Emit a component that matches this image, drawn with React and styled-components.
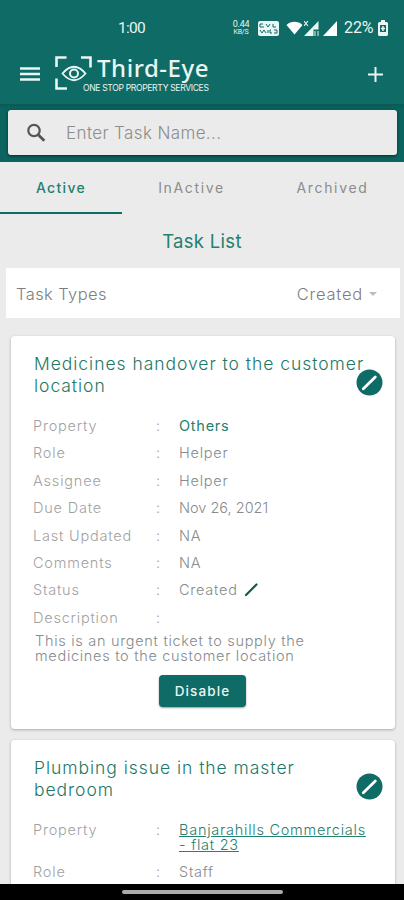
import React, { useState } from "react";
import styled, { createGlobalStyle } from "styled-components";

const GlobalStyle = createGlobalStyle`
  * {
    box-sizing: border-box;
  }
  body {
    margin: 0;
    overflow: hidden;
    background: #ebebeb;
    font-family: Inter, "Liberation Sans", sans-serif;
    font-weight: 300;
  }
`;

const Screen = styled.div`
  display: flex;
  flex-direction: column;
  height: 900px;
  overflow: hidden;
  background: #ebebeb;
`;

const Header = styled.header`
  flex: none;
  height: 104px;
  padding-top: 16px;
  background: #0f6b65;
  color: #e9f6f3;
`;

const StatusBar = styled.div`
  display: flex;
  align-items: center;
  height: 24px;
  padding: 0 16px 0 118px;
`;

const Clock = styled.span`
  flex: 1;
  font: 400 15.5px/20px Roboto, sans-serif;
  letter-spacing: -0.7px;
`;

const Speed = styled.span`
  display: flex;
  flex-direction: column;
  align-items: center;
  width: 18px;
  margin-right: 8px;
  font: 400 9px/9px Roboto, sans-serif;
  letter-spacing: -0.2px;

  small {
    font-size: 7px;
    line-height: 7px;
  }
`;

const StatusIcon = styled.svg`
  flex: none;
  margin-right: ${(props) => props.$gap || 0}px;
`;

const Battery = styled.span`
  width: 31px;
  margin-right: 3px;
  font: 400 16px/20px Roboto, sans-serif;
  letter-spacing: -0.1px;
`;

const AppBar = styled.div`
  display: flex;
  align-items: center;
  height: 64px;
  padding: 4px 20px 0;
`;

const IconButton = styled.button`
  display: flex;
  padding: 0;
  border: 0;
  background: none;
  color: inherit;
`;

const Brand = styled.div`
  display: flex;
  flex: 1;
  margin-left: 15px;
`;

const BrandText = styled.div`
  display: flex;
  flex-direction: column;
  height: 38px;
  margin-left: -10px;
`;

const BrandName = styled.span`
  padding-left: 14px;
  font: 500 24px/25px "Noto Sans", sans-serif;
  letter-spacing: 0.55px;
  white-space: nowrap;
`;

const Slogan = styled.span`
  margin-top: 2px;
  font: 400 8.6px/12px Inter, sans-serif;
  letter-spacing: -0.36px;
  white-space: nowrap;
`;

const SearchBand = styled.div`
  flex: none;
  height: 58px;
  padding: 6px 7px 0 8px;
  background: linear-gradient(#085a57, #0b645f 6px);
`;

const SearchBox = styled.label`
  display: flex;
  align-items: center;
  height: 45px;
  padding-left: 18px;
  border-radius: 3px;
  background: #ebebeb;
  box-shadow: 0 1px 3px #02302e;
`;

const SearchInput = styled.input`
  flex: 1;
  margin-left: 20px;
  padding: 0;
  border: 0;
  outline: 0;
  background: none;
  font: 300 17px Inter, sans-serif;
  letter-spacing: 0.38px;

  &::placeholder {
    color: #8d8d8d;
    opacity: 1;
  }
`;

const Tabs = styled.nav`
  display: flex;
  flex: none;
  height: 52px;
`;

const Tab = styled.button`
  flex: 0 0 ${(props) => props.$width}px;
  padding: 0;
  border: 0;
  border-bottom: 2px solid ${(props) => (props.$active ? "#0f6b65" : "transparent")};
  background: none;
  color: ${(props) => (props.$active ? "#24806f" : "#8c8c8c")};
  font: ${(props) => (props.$active ? 500 : 400)} 14px Inter, sans-serif;
  letter-spacing: ${(props) => (props.$active ? 1.3 : 1.65)}px;
`;

const PageTitle = styled.h1`
  flex: none;
  margin: 14px 0 13px;
  color: #24806f;
  font-size: 18.5px;
  font-weight: 400;
  line-height: 27px;
  letter-spacing: 0.3px;
  text-align: center;
`;

const TypeBar = styled.div`
  display: flex;
  flex: none;
  align-items: center;
  justify-content: space-between;
  height: 50px;
  margin: 0 4px 18px 6px;
  padding: 1px 23px 0 10px;
  background: #fff;
  color: #7d7d7d;
  font-size: 16.5px;
  letter-spacing: 0.4px;
`;

const TypeSelect = styled.span`
  display: flex;
  align-items: center;
  gap: 6px;
  letter-spacing: 0.8px;
`;

const Caret = styled.span`
  border: 4px solid transparent;
  border-top-color: #bdbdbd;
  border-bottom: 0;
`;

const Card = styled.article`
  flex: none;
  margin: 0 9px 11px 11px;
  padding: 17px 20px 22px 22px;
  border-radius: 4px;
  background: #fff;
  box-shadow: 0 1px 3px rgba(0, 0, 0, 0.28);
`;

const CardHead = styled.div`
  position: relative;
  margin-bottom: 16px;
`;

const CardTitle = styled.h2`
  margin: 0 0 0 1px;
  padding-right: 6px;
  color: #1d7865;
  font-size: 17.5px;
  font-weight: 300;
  line-height: 21.5px;
  letter-spacing: 0.96px;
`;

const EditBadge = styled.button`
  position: absolute;
  right: -8px;
  top: 16px;
  display: flex;
  padding: 0;
  border: 0;
  background: none;
`;

const Row = styled.div`
  display: grid;
  grid-template-columns: 123px 23px 1fr;
  align-items: start;
  min-height: 27.4px;
  padding: 6px 0;
  color: #a2a2a2;
  font-size: 14.5px;
  line-height: 15px;
  letter-spacing: 0.8px;
`;

const Value = styled.span`
  display: flex;
  align-items: center;
  gap: 6px;
  color: ${(props) => (props.$link ? "#24806f" : "#858b8d")};
  font-weight: ${(props) => (props.$link && !props.$underline ? 400 : 300)};
  text-decoration: ${(props) => (props.$underline ? "underline" : "none")};
  letter-spacing: ${(props) => (props.$tight ? 0 : 0.75)}px;
`;

const Description = styled.p`
  width: 290px;
  margin: 2px 0 12px 2px;
  color: #858b8d;
  font-size: 14.5px;
  line-height: 15px;
  letter-spacing: 0.7px;
`;

const DisableButton = styled.button`
  display: block;
  width: 87px;
  height: 32px;
  margin: 0 0 0 126px;
  border: 0;
  border-radius: 4px;
  background: #0f6b65;
  box-shadow: 0 1px 2px rgba(0, 0, 0, 0.4);
  color: #e9f6f3;
  font: 500 13.5px Inter, sans-serif;
  letter-spacing: 1.1px;
`;

const NavBar = styled.footer`
  position: fixed;
  left: 0;
  right: 0;
  bottom: 0;
  display: flex;
  justify-content: center;
  height: 16px;
  padding-top: 6px;
  background: #000;
`;

const NavHandle = styled.span`
  width: 161px;
  height: 4px;
  border-radius: 2px;
  background: #aaa;
`;

const tabs = [
  { name: "Active", width: 122 },
  { name: "InActive", width: 139 },
  { name: "Archived", width: 143 },
];

const tasks = [
  {
    title: "Medicines handover to the customer location",
    fields: [
      { label: "Property", value: "Others", link: true },
      { label: "Role", value: "Helper" },
      { label: "Assignee", value: "Helper" },
      { label: "Due Date", value: "Nov 26, 2021", tight: true },
      { label: "Last Updated", value: "NA" },
      { label: "Comments", value: "NA" },
      { label: "Status", value: "Created", editable: true },
      { label: "Description", value: "" },
    ],
    description: "This is an urgent ticket to supply the medicines to the customer location",
  },
  {
    title: "Plumbing issue in the master bedroom",
    fields: [
      { label: "Property", value: "Banjarahills Commercials -\u00a0flat 23", link: true, underline: true },
      { label: "Role", value: "Staff" },
    ],
  },
];

function StatusIcons() {
  return (
    <>
      <StatusIcon $gap={7} width="21" height="15" viewBox="0 0 21 15">
        <rect width="21" height="15" rx="2" fill="#e9f6f3" />
        <path
          d="M2 3h3M2 3v3h4M8 3l2 3 2-3M15 3v3h3M2 9l2 3 2-3 2 3M10 9v3M13 9h-1v3h2M16 9h3v3h-3"
          fill="none"
          stroke="#0f6b65"
          strokeWidth="1"
        />
      </StatusIcon>
      <StatusIcon $gap={1} width="17" height="14" viewBox="0 0 17 14">
        <path d="M.5 4C5-.2 12-.2 16.5 4L8.5 13.5z" fill="#fff" />
      </StatusIcon>
      <StatusIcon $gap={4} width="15" height="15" viewBox="0 0 15 15">
        <path d="M14.500 0v8.500H9.500V15H0z" fill="#e9f6f3" />
        <path d="M0 0l4 5M4 0L0 5" stroke="#e9f6f3" strokeWidth="1.1" />
        <path d="M11 10v5M14 10v5" stroke="#e9f6f3" />
      </StatusIcon>
      <StatusIcon $gap={7} width="14" height="15" viewBox="0 0 14 15">
        <path d="M14 0v15H0z" fill="#fff" />
      </StatusIcon>
      <Battery>22%</Battery>
      <StatusIcon width="10" height="16" viewBox="0 0 10 16">
        <path d="M3 0h4v2h1.500Q10 2 10 3.500v11Q10 16 8.500 16h-7Q0 16 0 14.500v-11Q0 2 1.500 2H3z" fill="#e9f6f3" />
        <path d="M2 5h6v7H2z" fill="#0f6b65" />
        <path d="M5 6v5M3 8.500h4" stroke="#e9f6f3" strokeWidth="1.500" />
      </StatusIcon>
    </>
  );
}

function Logo() {
  return (
    <svg width="38" height="36" viewBox="0 0 38 36" fill="none" stroke="#e9f6f3">
      <path d="M1.500 12V2.500h10M26 2.500h9.500v10M1.500 23.500v10H12" strokeWidth="2.600" />
      <path d="M7.500 18.500Q19 5 30.500 18.500Q19 32 7.500 18.500z" strokeWidth="1.800" />
      <circle cx="19" cy="18.500" r="4" strokeWidth="2" />
    </svg>
  );
}

function TaskCard({ task }) {
  return (
    <Card>
      <CardHead>
        <CardTitle>{task.title}</CardTitle>
        <EditBadge aria-label="Edit task">
          <svg width="27" height="27" viewBox="0 0 27 27">
            <circle cx="13.500" cy="13.500" r="13" fill="#0f6b65" />
            <path d="M7.300 19.700L19.300 8" stroke="#fff" strokeWidth="2.800" strokeLinecap="round" />
          </svg>
        </EditBadge>
      </CardHead>
      {task.fields.map((field) => (
        <Row key={field.label}>
          <span>{field.label}</span>
          <span>:</span>
          <Value $link={field.link} $underline={field.underline} $tight={field.tight}>
            {field.value}
            {field.editable && (
              <svg width="15" height="15" viewBox="0 0 15 15">
                <path d="M2 13L12.500 2.500" stroke="#0f5b4d" strokeWidth="2.200" strokeLinecap="round" />
              </svg>
            )}
          </Value>
        </Row>
      ))}
      {task.description && <Description>{task.description}</Description>}
      {task.description && <DisableButton>Disable</DisableButton>}
    </Card>
  );
}

function App() {
  const [activeTab, setActiveTab] = useState("Active");
  const [search, setSearch] = useState("");

  return (
    <Screen>
      <GlobalStyle />
      <Header>
        <StatusBar>
          <Clock>1:00</Clock>
          <Speed>
            <span>0.44</span>
            <small>KB/S</small>
          </Speed>
          <StatusIcons />
        </StatusBar>
        <AppBar>
          <IconButton aria-label="Menu">
            <svg width="20" height="16" viewBox="0 0 20 16" stroke="#e9f6f3" strokeWidth="2.500">
              <path d="M0 2.500h20M0 8h20M0 13.500h20" />
            </svg>
          </IconButton>
          <Brand>
            <Logo />
            <BrandText>
              <BrandName>Third-Eye</BrandName>
              <Slogan>ONE STOP PROPERTY SERVICES</Slogan>
            </BrandText>
          </Brand>
          <IconButton aria-label="Add task">
            <svg width="17" height="17" viewBox="0 0 17 17" stroke="#e9f6f3" strokeWidth="2">
              <path d="M8.500 1v15M1 8.500h15" />
            </svg>
          </IconButton>
        </AppBar>
      </Header>
      <SearchBand>
        <SearchBox>
          <svg width="20" height="20" viewBox="0 0 20 20" fill="none" stroke="#555">
            <circle cx="8" cy="7.500" r="5.700" strokeWidth="2.200" />
            <path d="M12 11.500l6.300 6.300" strokeWidth="2.800" />
          </svg>
          <SearchInput
            placeholder="Enter Task Name..."
            value={search}
            onChange={(event) => setSearch(event.target.value)}
          />
        </SearchBox>
      </SearchBand>
      <Tabs>
        {tabs.map((tab) => (
          <Tab
            key={tab.name}
            $width={tab.width}
            $active={tab.name === activeTab}
            onClick={() => setActiveTab(tab.name)}
          >
            {tab.name}
          </Tab>
        ))}
      </Tabs>
      <PageTitle>Task List</PageTitle>
      <TypeBar>
        <span>Task Types</span>
        <TypeSelect>
          Created
          <Caret />
        </TypeSelect>
      </TypeBar>
      {tasks.map((task) => (
        <TaskCard key={task.title} task={task} />
      ))}
      <NavBar>
        <NavHandle />
      </NavBar>
    </Screen>
  );
}

export default App;
